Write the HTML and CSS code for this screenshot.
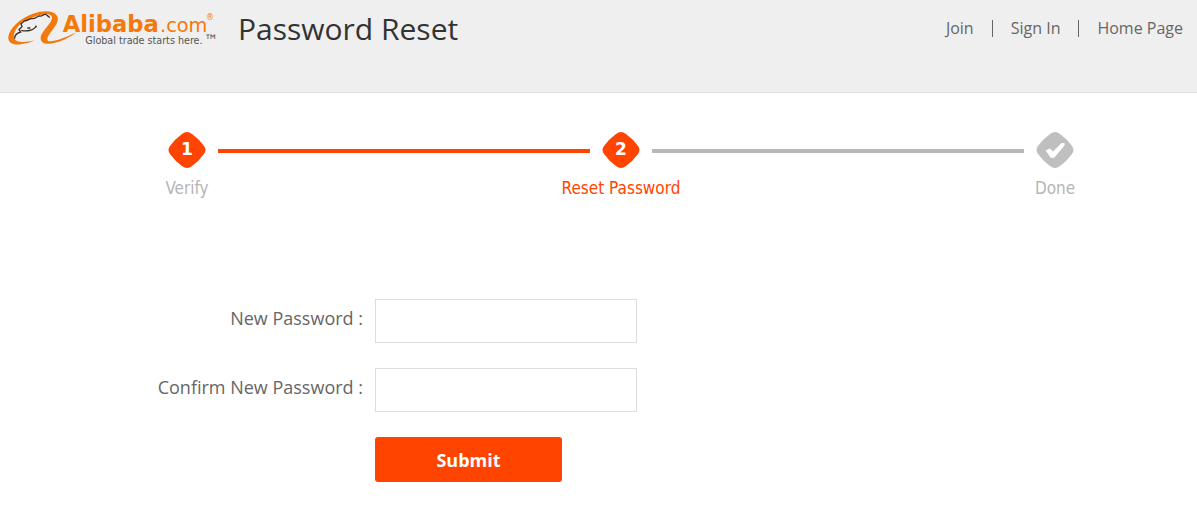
FILE: index.html
```html
<!DOCTYPE html>
<html lang="en">
<head>
<meta charset="utf-8">
<meta name="viewport" content="width=device-width, initial-scale=1">
<title>Password Reset</title>
<link rel="stylesheet" href="styles.css">
</head>
<body>
<header class="header">
  <a class="logo" href="#" aria-label="Alibaba.com">
    <svg class="logo-art" viewBox="0 0 690 180" aria-hidden="true">
      <path class="orange" d="M171 47C160 31 130 30 99 41C62 54 29 83 25 110C23 128 40 136 62 133C78 131 94 127 104 121C80 127 53 130 44 118C37 107 45 87 61 72C66 64 72 61 80 62C99 50 120 43 139 43C154 42 159 50 154 61C147 78 123 97 122 113C121 127 134 135 158 130C183 126 209 112 230 97C201 110 173 123 150 124C137 123 141 111 151 98C165 80 180 61 171 47Z"/>
      <path class="face" d="M150 52C143 52 142 42 135 43C128 44 126 51 117 48C109 51 105 57 96 56C86 56 81 64 74 62L63 71L66 80L57 89L62 96C52 99 43 106 44 116M64 91C79 95 98 92 109 80M106 77L110 81M82 84L91 84"/>
      <text class="brand" x="188" y="95">Alibaba</text>
      <text class="domain" x="480" y="95">.com</text>
      <text class="registered" x="618" y="59">®</text>
      <text class="tagline" x="256" y="132">Global trade starts here.</text>
      <text class="trademark" x="612" y="137">™</text>
    </svg>
  </a>
  <h1 class="title">Password Reset</h1>
  <nav class="nav">
    <a href="#">Join</a>
    <a href="#">Sign In</a>
    <a href="#">Home Page</a>
  </nav>
</header>
<main class="main">
  <ol class="steps">
    <li class="step">
      <svg class="badge active" viewBox="0 0 38 38" aria-hidden="true"><path d="M14 3Q19-1 24 3Q31 8 36 15Q39 19 36 23Q31 30 24 35Q19 39 14 35Q7 30 2 23Q-1 19 2 15Q7 8 14 3Z"/><text x="19" y="24">1</text></svg>
      <span class="step-label">Verify</span>
    </li>
    <li class="track done" aria-hidden="true"></li>
    <li class="step current" aria-current="step">
      <svg class="badge active" viewBox="0 0 38 38" aria-hidden="true"><path d="M14 3Q19-1 24 3Q31 8 36 15Q39 19 36 23Q31 30 24 35Q19 39 14 35Q7 30 2 23Q-1 19 2 15Q7 8 14 3Z"/><text x="19" y="24">2</text></svg>
      <span class="step-label">Reset Password</span>
    </li>
    <li class="track" aria-hidden="true"></li>
    <li class="step">
      <svg class="badge" viewBox="0 0 38 38" aria-hidden="true"><path class="pending" d="M14 3Q19-1 24 3Q31 8 36 15Q39 19 36 23Q31 30 24 35Q19 39 14 35Q7 30 2 23Q-1 19 2 15Q7 8 14 3Z"/><path class="check" d="M9.5 19.5L14 17.5L17 20.5L25.5 12L28.5 12L28.5 14.5L18.5 26.5L15 27Z"/></svg>
      <span class="step-label">Done</span>
    </li>
  </ol>
  <form class="form">
    <label class="label" for="new-password">New Password :</label>
    <input class="field" id="new-password" type="password">
    <label class="label" for="confirm-password">Confirm New Password :</label>
    <input class="field" id="confirm-password" type="password">
    <button class="submit" type="button">Submit</button>
  </form>
</main>
</body>
</html>
```
FILE: styles.css
```css
* {
  box-sizing: border-box;
}

body {
  margin: 0;
  background: #fff;
  color: #666;
  font-family: "Noto Sans", "Open Sans", sans-serif;
}

.header {
  display: flex;
  align-items: flex-start;
  min-height: 93px;
  padding-right: 14px;
  background: #efefef;
  border-bottom: 1px solid #e0e0e0;
}

.logo-art {
  display: block;
  width: 230px;
  height: 60px;
}

.orange,
.brand,
.domain,
.registered {
  fill: #f5780a;
}

.face {
  fill: none;
  stroke: #39302a;
  stroke-width: 4;
}

.brand {
  font: bold 68px "DejaVu Sans", sans-serif;
}

.domain {
  font: 58px "DejaVu Sans", sans-serif;
}

.registered {
  font: 24px "DejaVu Sans", sans-serif;
}

.tagline,
.trademark {
  fill: #555;
  font: 32px "DejaVu Sans Condensed", "DejaVu Sans", sans-serif;
}

.trademark {
  font-size: 48px;
}

.title {
  margin: 7px 0 0 8px;
  color: #333;
  font-family: "Open Sans", sans-serif;
  font-size: 30px;
  font-weight: 400;
  line-height: 44px;
}

.nav {
  display: flex;
  margin: 20px 0 0 auto;
  font-family: "Open Sans", sans-serif;
  font-size: 16px;
  line-height: 17px;
}

.nav a {
  color: #666;
  text-decoration: none;
}

.nav a + a {
  margin-left: 18px;
  padding-left: 18px;
  border-left: 1px solid #666;
}

.steps {
  display: grid;
  grid-template-columns: 62px 1fr 62px 1fr 62px;
  margin: 0;
  padding: 38px 111px 0 156px;
  list-style: none;
}

.step {
  display: flex;
  flex-direction: column;
  align-items: center;
  color: #b5b5b5;
  font-family: "DejaVu Sans Condensed", "DejaVu Sans", sans-serif;
  font-size: 17px;
  line-height: 24px;
  white-space: nowrap;
}

.step-label {
  margin-top: 7px;
}

.current {
  color: #ff4400;
}

.badge {
  width: 38px;
  height: 38px;
}

.active {
  fill: #ff4400;
}

.badge text {
  fill: #fff;
  font: bold 17px "DejaVu Sans", sans-serif;
  text-anchor: middle;
}

.pending {
  fill: #bfbfbf;
}

.check {
  fill: #fff;
}

.track {
  height: 4px;
  margin-top: 18px;
  background: #b7b7b7;
}

.done {
  background: #ff4400;
}

.form {
  display: grid;
  grid-template-columns: 363px 262px;
  column-gap: 12px;
  row-gap: 25px;
  margin-top: 99px;
  padding-bottom: 32px;
}

.label {
  font-family: "Open Sans", sans-serif;
  font-size: 18px;
  line-height: 38px;
  text-align: right;
}

.field {
  width: 100%;
  height: 44px;
  padding: 0 12px;
  border: 1px solid #ddd;
  background: #fff;
  font: inherit;
}

.submit {
  grid-column: 2;
  justify-self: start;
  width: 187px;
  height: 45px;
  padding: 0;
  border: 0;
  border-radius: 3px;
  background: #ff4400;
  color: #fff;
  font: bold 18px "Open Sans", sans-serif;
}
```
